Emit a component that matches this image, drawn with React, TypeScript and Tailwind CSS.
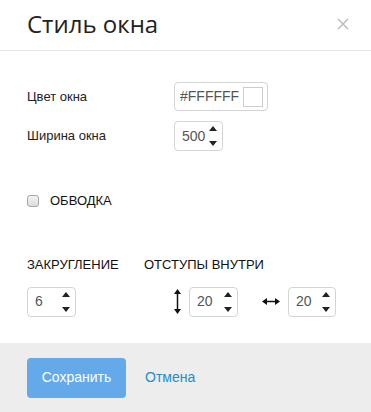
import { useState } from "react";

function Spinner({ value, width = "w-[49px]" }: { value: string; width?: string }) {
  return (
    <div
      className={`${width} h-[30px] flex items-center justify-between rounded-[4px] border border-[#d4d4d4] bg-white pl-[7px] pr-[5px]`}
    >
      <span className="text-[14px] text-[#555]">{value}</span>
      <div className="flex flex-col items-center justify-between h-[20px]">
        <svg width="8" height="5" viewBox="0 0 8 5">
          <path d="M4 0 L8 5 L0 5 Z" fill="#222" />
        </svg>
        <svg width="8" height="5" viewBox="0 0 8 5">
          <path d="M0 0 L8 0 L4 5 Z" fill="#222" />
        </svg>
      </div>
    </div>
  );
}

export default function App() {
  const [border, setBorder] = useState(false);

  return (
    <div className="w-[371px] h-[412px] bg-white flex flex-col font-['Liberation_Sans',Arial,sans-serif] text-[#222]">
      {/* header */}
      <div className="h-[51px] flex items-center justify-between pl-[27px] pr-[22px] border-b border-[#e5e5e5]">
        <h2 className="font-['Open_Sans',sans-serif] text-[24px] text-[#222] leading-none -mt-[2px]">
          Стиль окна
        </h2>
        <svg width="12" height="12" viewBox="0 0 12 12" className="-mt-[3px]">
          <path d="M1 1 L11 11 M11 1 L1 11" stroke="#bdbdbd" strokeWidth="1.5" />
        </svg>
      </div>

      {/* body */}
      <div className="flex-1 flex flex-col pl-[27px] pt-[31px]">
        <div className="flex items-center h-[29px]">
          <span className="w-[147px] text-[13px]">Цвет окна</span>
          <div className="w-[94px] h-[29px] flex items-center justify-between rounded-[4px] border border-[#d4d4d4] bg-white pl-[5px] pr-[4px]">
            <span className="text-[14px] text-[#555]">#FFFFFF</span>
            <div className="w-[20px] h-[20px] border border-[#ccc] bg-white" />
          </div>
        </div>

        <div className="flex items-center h-[30px] mt-[10px]">
          <span className="w-[147px] text-[13px]">Ширина окна</span>
          <Spinner value="500" />
        </div>

        <label
          className="flex items-center mt-[43px] h-[14px] cursor-pointer"
          onClick={() => setBorder(!border)}
        >
          <span
            className={`w-[12px] h-[12px] rounded-[3px] border border-[#a9a9a9] ${
              border ? "bg-[#64a9ea]" : "bg-gradient-to-b from-[#f4f4f4] to-[#dcdcdc]"
            }`}
          />
          <span className="ml-[11px] text-[13px] text-[#111]">ОБВОДКА</span>
        </label>

        <div className="flex mt-[47px] text-[13px] text-[#111]">
          <span className="w-[117px]">ЗАКРУГЛЕНИЕ</span>
          <span>ОТСТУПЫ ВНУТРИ</span>
        </div>

        <div className="flex items-center mt-[12px]">
          <Spinner value="6" />
          <div className="ml-[98px] flex items-center">
            <svg width="7" height="25" viewBox="0 0 7 25">
              <path d="M3.5 0 L7 5 L0 5 Z M3.5 25 L7 20 L0 20 Z" fill="#111" />
              <path d="M3.5 4 L3.5 21" stroke="#111" strokeWidth="1.5" />
            </svg>
            <div className="ml-[8px]">
              <Spinner value="20" />
            </div>
          </div>
          <div className="ml-[24px] flex items-center">
            <svg width="18" height="7" viewBox="0 0 18 7">
              <path d="M0 3.5 L5 0 L5 7 Z M18 3.5 L13 0 L13 7 Z" fill="#111" />
              <path d="M4 3.5 L14 3.5" stroke="#111" strokeWidth="1.5" />
            </svg>
            <div className="ml-[8px]">
              <Spinner value="20" width="w-[48px]" />
            </div>
          </div>
        </div>
      </div>

      {/* footer */}
      <div className="h-[69px] bg-[#ededed] flex items-center pl-[27px]">
        <button className="w-[99px] h-[40px] rounded-[4px] bg-[#64a9ea] text-white text-[14px]">
          Сохранить
        </button>
        <button className="ml-[19px] text-[14px] text-[#1a8fd2]">Отмена</button>
      </div>
    </div>
  );
}
